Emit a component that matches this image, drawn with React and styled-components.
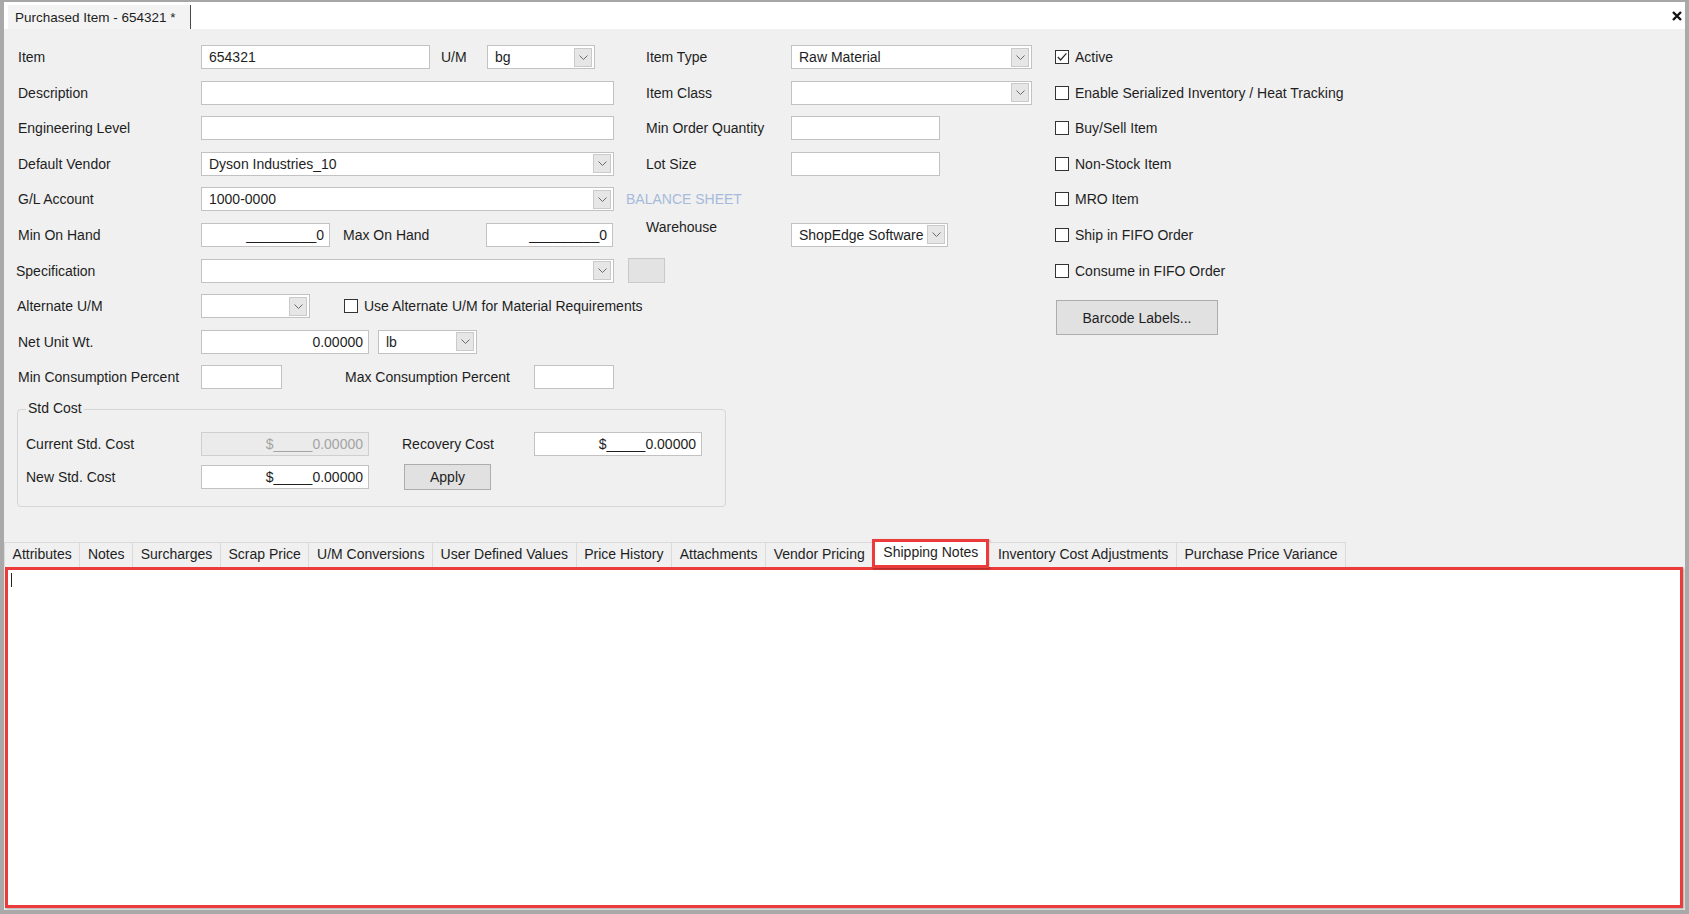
import React from 'react';
import styled, { createGlobalStyle } from 'styled-components';

const GlobalStyle = createGlobalStyle`
	html, body {
		margin: 0;
		padding: 0;
		background: #fff;
	}
	body {
		font-family: 'Liberation Sans', Arial, sans-serif;
		font-size: 14px;
		color: #1e1e1e;
	}
	* {
		box-sizing: border-box;
	}
`;

const RED = '#ec3b3b';

const Chevron = () => (
	<svg width='9' height='5' viewBox='0 0 9 5'>
		<path d='M0.5 0.5 L4.5 4.5 L8.5 0.5' stroke='#6a6a6a' fill='none' strokeWidth='1' />
	</svg>
);

const Combo = ({ w, ml, children }) => (
	<ComboBox $w={w} $ml={ml}>
		<ComboText>{children}</ComboText>
		<DropBtn>
			<Chevron />
		</DropBtn>
	</ComboBox>
);

const Check = ({ checked, ml, children }) => (
	<CheckRow $ml={ml}>
		<Box>
			{checked && (
				<svg width='12' height='12' viewBox='0 0 12 12'>
					<path d='M1.8 6 L4.6 9 L10.4 2.4' stroke='#2b2b2b' fill='none' strokeWidth='1.3' />
				</svg>
			)}
		</Box>
		<span>{children}</span>
	</CheckRow>
);

const tabs = [
	'Attributes',
	'Notes',
	'Surcharges',
	'Scrap Price',
	'U/M Conversions',
	'User Defined Values',
	'Price History',
	'Attachments',
	'Vendor Pricing',
	'Shipping Notes',
	'Inventory Cost Adjustments',
	'Purchase Price Variance',
];

const App = () => {
	return (
		<>
			<GlobalStyle />
			<Window>
				<DocStrip>
					<DocTab>Purchased Item - 654321 *</DocTab>
					<Close>
						<svg width='10' height='10' viewBox='0 0 10 10'>
							<path d='M1 1 L9 9 M9 1 L1 9' stroke='#111' strokeWidth='2.4' />
						</svg>
					</Close>
				</DocStrip>
				<Body>
					<Top>
						<Fields>
							<Row>
								<Left>
									<Label $w={183}>Item</Label>
									<TextBox $w={229}>654321</TextBox>
									<Label $w={46} $ml={11}>U/M</Label>
									<Combo w={108}>bg</Combo>
								</Left>
								<Mid>
									<MidLabel>Item Type</MidLabel>
									<Combo w={241}>Raw Material</Combo>
								</Mid>
							</Row>
							<Row>
								<Left>
									<Label $w={183}>Description</Label>
									<TextBox $w={413} />
								</Left>
								<Mid>
									<MidLabel>Item Class</MidLabel>
									<Combo w={241} />
								</Mid>
							</Row>
							<Row>
								<Left>
									<Label $w={183}>Engineering Level</Label>
									<TextBox $w={413} />
								</Left>
								<Mid>
									<MidLabel>Min Order Quantity</MidLabel>
									<TextBox $w={149} />
								</Mid>
							</Row>
							<Row>
								<Left>
									<Label $w={183}>Default Vendor</Label>
									<Combo w={413}>Dyson Industries_10</Combo>
								</Left>
								<Mid>
									<MidLabel>Lot Size</MidLabel>
									<TextBox $w={149} />
								</Mid>
							</Row>
							<Row>
								<Left>
									<Label $w={183}>G/L Account</Label>
									<Combo w={413}>1000-0000</Combo>
									<Hint>BALANCE SHEET</Hint>
								</Left>
							</Row>
							<Row>
								<Left>
									<Label $w={183}>Min On Hand</Label>
									<TextBox $w={129} $right>_________0</TextBox>
									<Label $w={143} $ml={13}>Max On Hand</Label>
									<TextBox $w={127} $right>_________0</TextBox>
								</Left>
								<Mid>
									<MidLabel $raise>Warehouse</MidLabel>
									<Combo w={157}>ShopEdge Software</Combo>
								</Mid>
							</Row>
							<Row>
								<Left>
									<Label $w={183} $shift={-2}>Specification</Label>
									<Combo w={413} />
									<SmallBtn />
								</Left>
							</Row>
							<Row>
								<Left>
									<Label $w={183} $shift={-1}>Alternate U/M</Label>
									<Combo w={109} />
									<Check ml={34}>Use Alternate U/M for Material Requirements</Check>
								</Left>
							</Row>
							<Row>
								<Left>
									<Label $w={183}>Net Unit Wt.</Label>
									<TextBox $w={168} $right>0.00000</TextBox>
									<Combo w={99} ml={9}>lb</Combo>
								</Left>
							</Row>
							<Row>
								<Left>
									<Label $w={183}>Min Consumption Percent</Label>
									<TextBox $w={81} />
									<Label $w={189} $ml={63}>Max Consumption Percent</Label>
									<TextBox $w={80} />
								</Left>
							</Row>
							<Group>
								<GroupTitle>Std Cost</GroupTitle>
								<GroupRow>
									<Label $w={175}>Current Std. Cost</Label>
									<TextBox $w={168} $right $disabled>$_____0.00000</TextBox>
									<Label $w={132} $ml={33}>Recovery Cost</Label>
									<TextBox $w={168} $right>$_____0.00000</TextBox>
								</GroupRow>
								<GroupRow>
									<Label $w={175}>New Std. Cost</Label>
									<TextBox $w={168} $right>$_____0.00000</TextBox>
									<Button $w={87} $ml={35}>Apply</Button>
								</GroupRow>
							</Group>
						</Fields>
						<Options>
							<Check checked>Active</Check>
							<Check>Enable Serialized Inventory / Heat Tracking</Check>
							<Check>Buy/Sell Item</Check>
							<Check>Non-Stock Item</Check>
							<Check>MRO Item</Check>
							<Check>Ship in FIFO Order</Check>
							<Check>Consume in FIFO Order</Check>
							<Button $w={162} $h={35} $ml={1} $mt={6}>
								Barcode Labels...
							</Button>
						</Options>
					</Top>
					<TabRow>
						{tabs.map((t) => (
							<Tab key={t} $active={t === 'Shipping Notes'}>
								{t}
							</Tab>
						))}
					</TabRow>
					<Panel>
						<Caret />
					</Panel>
				</Body>
			</Window>
		</>
	);
};

const Window = styled.div`
	width: 1689px;
	height: 914px;
	display: flex;
	flex-direction: column;
	border-top: 2px solid #a6a6a6;
	border-left: 4px solid #a9a9a9;
	border-right: 4px solid #a9a9a9;
	border-bottom: 4px solid #a9a9a9;
	background: #f0f0f0;
	overflow: hidden;
`;
const DocStrip = styled.div`
	height: 27px;
	flex: none;
	display: flex;
	align-items: flex-end;
	background: #fff;
`;
const DocTab = styled.div`
	height: 24px;
	margin-left: 4px;
	padding: 0 14px 0 7px;
	display: flex;
	align-items: center;
	background: #f3f3f3;
	border-right: 1px solid #4a4a4a;
	font-size: 13.5px;
	white-space: nowrap;
`;
const Close = styled.div`
	margin-left: auto;
	margin-right: 3px;
	align-self: center;
	display: flex;
`;
const Body = styled.div`
	flex: 1;
	display: flex;
	flex-direction: column;
	min-height: 0;
`;
const Top = styled.div`
	display: flex;
	padding: 16px 0 0 14px;
`;
const Fields = styled.div`
	width: 1037px;
	flex: none;
	display: flex;
	flex-direction: column;
	gap: 11.6px;
`;
const Row = styled.div`
	height: 24px;
	display: flex;
	align-items: center;
`;
const Left = styled.div`
	width: 628px;
	flex: none;
	display: flex;
	align-items: center;
	white-space: nowrap;
`;
const Mid = styled.div`
	display: flex;
	align-items: center;
`;
const Label = styled.div`
	width: ${(p) => p.$w}px;
	margin-left: ${(p) => p.$ml || 0}px;
	flex: none;
	white-space: nowrap;
	position: relative;
	left: ${(p) => p.$shift || 0}px;
`;
const MidLabel = styled.div`
	width: 145px;
	flex: none;
	white-space: nowrap;
	position: relative;
	top: ${(p) => (p.$raise ? -8 : 0)}px;
`;
const TextBox = styled.div`
	width: ${(p) => p.$w}px;
	height: 24px;
	flex: none;
	display: flex;
	align-items: center;
	justify-content: ${(p) => (p.$right ? 'flex-end' : 'flex-start')};
	padding: ${(p) => (p.$right ? '0 5px 0 7px' : '0 7px')};
	border: 1px solid ${(p) => (p.$disabled ? '#cfcfcf' : '#c2c2c2')};
	background: ${(p) => (p.$disabled ? '#ebebeb' : '#fff')};
	color: ${(p) => (p.$disabled ? '#a4a4a4' : '#1e1e1e')};
	white-space: nowrap;
	overflow: hidden;
`;
const ComboBox = styled.div`
	width: ${(p) => p.$w}px;
	margin-left: ${(p) => p.$ml || 0}px;
	height: 24px;
	flex: none;
	display: flex;
	align-items: center;
	padding: 0 2px 0 7px;
	border: 1px solid #c2c2c2;
	background: #fff;
`;
const ComboText = styled.div`
	flex: 1;
	white-space: nowrap;
	overflow: hidden;
`;
const DropBtn = styled.div`
	width: 18px;
	height: 19px;
	flex: none;
	display: flex;
	align-items: center;
	justify-content: center;
	background: #e6e6e6;
	border: 1px solid #cacaca;
`;
const Hint = styled.div`
	margin-left: 12px;
	color: #a6badb;
	white-space: nowrap;
`;
const SmallBtn = styled.div`
	width: 37px;
	height: 25px;
	margin-left: 14px;
	flex: none;
	background: #e3e3e3;
	border: 1px solid #c9c9c9;
`;
const CheckRow = styled.div`
	height: 24px;
	margin-left: ${(p) => p.$ml || 0}px;
	display: flex;
	align-items: center;
	gap: 6px;
	white-space: nowrap;
`;
const Box = styled.div`
	width: 14px;
	height: 14px;
	flex: none;
	border: 1px solid #333;
	background: #fff;
	display: flex;
	align-items: center;
	justify-content: center;
`;
const Group = styled.div`
	position: relative;
	width: 709px;
	height: 98px;
	margin: 8px 0 0 -1px;
	padding: 22px 0 0 8px;
	border: 1px solid #d6d6d6;
	border-radius: 4px;
	display: flex;
	flex-direction: column;
	gap: 8px;
`;
const GroupTitle = styled.div`
	position: absolute;
	top: -10px;
	left: 8px;
	padding: 0 2px;
	background: #f0f0f0;
	line-height: 16px;
`;
const GroupRow = styled.div`
	height: 25px;
	display: flex;
	align-items: center;
`;
const Button = styled.div`
	width: ${(p) => p.$w}px;
	height: ${(p) => p.$h || 26}px;
	margin-left: ${(p) => p.$ml || 0}px;
	margin-top: ${(p) => p.$mt || 0}px;
	flex: none;
	display: flex;
	align-items: center;
	justify-content: center;
	background: #e1e1e1;
	border: 1px solid #adadad;
	white-space: nowrap;
`;
const Options = styled.div`
	display: flex;
	flex-direction: column;
	align-items: flex-start;
	gap: 11.6px;
`;
const TabRow = styled.div`
	height: 28px;
	margin-top: 32px;
	flex: none;
	display: flex;
	align-items: flex-end;
	position: relative;
	z-index: 1;
`;
const Tab = styled.div`
	height: ${(p) => (p.$active ? 29 : 25)}px;
	margin-bottom: ${(p) => (p.$active ? -1 : 0)}px;
	padding: ${(p) => (p.$active ? '0 8px 3px' : '0 7.6px 2px')};
	display: flex;
	align-items: center;
	white-space: nowrap;
	background: ${(p) => (p.$active ? '#fff' : '#f0f0f0')};
	border: ${(p) => (p.$active ? `3px solid ${RED}` : '1px solid #dadada')};
	border-bottom: ${(p) => (p.$active ? `3px solid ${RED}` : 'none')};
	border-right: ${(p) => (p.$active ? `3px solid ${RED}` : 'none')};
	box-shadow: ${(p) => (p.$active ? '1px 1px 2px rgba(0,0,0,0.35)' : 'none')};
	&:last-child {
		border-right: 1px solid #dadada;
	}
`;
const Panel = styled.div`
	flex: 1;
	margin: 0 2px 2px 1px;
	background: #fff;
	border: 3px solid ${RED};
	box-shadow: 1px 1px 2px rgba(0, 0, 0, 0.3);
	padding: 3px 0 0 3px;
`;
const Caret = styled.div`
	width: 1px;
	height: 14px;
	background: #222;
`;

export default App;
